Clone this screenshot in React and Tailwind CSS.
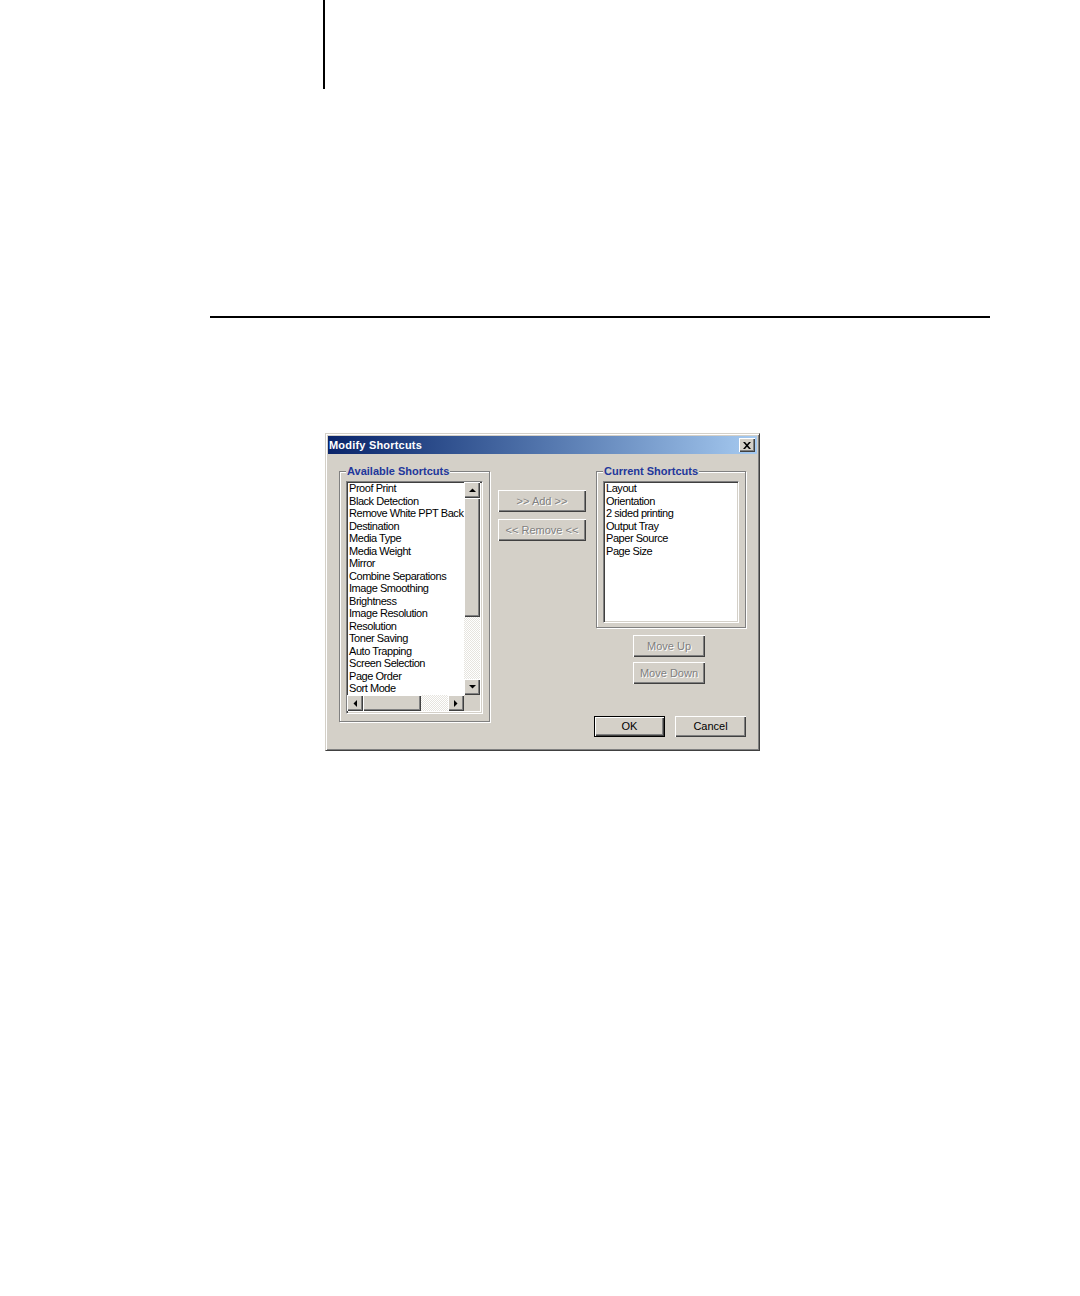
import React from 'react';

const available = [
  'Proof Print',
  'Black Detection',
  'Remove White PPT Back',
  'Destination',
  'Media Type',
  'Media Weight',
  'Mirror',
  'Combine Separations',
  'Image Smoothing',
  'Brightness',
  'Image Resolution',
  'Resolution',
  'Toner Saving',
  'Auto Trapping',
  'Screen Selection',
  'Page Order',
  'Sort Mode',
  'Print Cover Page',
];

const current = ['Layout', 'Orientation', '2 sided printing', 'Output Tray', 'Paper Source', 'Page Size'];

const raised = 'bg-[#d4d0c8] shadow-[inset_1px_1px_0_#fff,inset_-1px_-1px_0_#404040,inset_-2px_-2px_0_#808080]';
const sunken =
  'border border-t-[#808080] border-l-[#808080] border-b-white border-r-white shadow-[inset_1px_1px_0_#404040,inset_-1px_-1px_0_#d4d0c8]';
const checker = 'bg-[repeating-conic-gradient(#e6e4de_0_25%,#ffffff_0_50%)] bg-[length:2px_2px]';

// Small triangle for scroll buttons
const Arrow = ({ dir }) => {
  const pts = {
    up: '0,4 7,4 3.5,0.5',
    down: '0,0 7,0 3.5,3.5',
    left: '4,0 4,7 0.5,3.5',
    right: '0,0 0,7 3.5,3.5',
  }[dir];
  const vertical = dir === 'up' || dir === 'down';
  return (
    <svg width={vertical ? 7 : 4} height={vertical ? 4 : 7} viewBox={vertical ? '0 0 7 4' : '0 0 4 7'}>
      <polygon points={pts} fill="#000" />
    </svg>
  );
};

const ScrollBtn = ({ dir }) => (
  <div className={`w-[16px] h-[16px] flex items-center justify-center ${raised}`}>
    <Arrow dir={dir} />
  </div>
);

const Button = ({ children, disabled, isDefault, className = '' }) => (
  <div
    className={`flex items-center justify-center text-[11px] ${
      isDefault
        ? 'bg-[#d4d0c8] border border-black shadow-[inset_1px_1px_0_#fff,inset_-1px_-1px_0_#404040,inset_-2px_-2px_0_#808080]'
        : raised
    } ${disabled ? 'text-[#808080] [text-shadow:1px_1px_0_#fff]' : 'text-black'} ${className}`}
  >
    {children}
  </div>
);

const GroupBox = ({ title, className = '', children }) => (
  <div className={`relative border border-[#808080] shadow-[inset_1px_1px_0_#fff,1px_1px_0_#fff] ${className}`}>
    <div className="absolute top-[-7px] left-[6px] px-[1px] bg-[#d4d0c8] text-[11px] leading-[13px] font-bold text-[#22379b]">
      {title}
    </div>
    {children}
  </div>
);

const ListItems = ({ items }) => (
  <div className="pl-[2px] text-[11px] leading-[12.5px] tracking-[-0.45px] text-black whitespace-nowrap overflow-hidden">
    {items.map((it) => (
      <div key={it}>{it}</div>
    ))}
  </div>
);

function Dialog() {
  return (
    <div
      className="w-[435px] h-[318px] bg-[#d4d0c8] p-[2px] border border-t-[#d4d0c8] border-l-[#d4d0c8] border-r-[#404040] border-b-[#404040] shadow-[inset_1px_1px_0_#fff,inset_-1px_-1px_0_#808080]"
      style={{ fontFamily: '"Liberation Sans", Arial, sans-serif' }}
    >
      {/* Title bar */}
      <div className="h-[18px] flex items-center justify-between pl-[1px] pr-[2px] bg-gradient-to-r from-[#0a246a] to-[#a6caf0]">
        <span className="text-white font-bold text-[11px] tracking-[0.2px]">Modify Shortcuts</span>
        <div className={`w-[16px] h-[14px] flex items-center justify-center ${raised}`}>
          <svg width="8" height="7" viewBox="0 0 8 7">
            <path d="M0 0h2l2 2.2L6 0h2L5 3.5 8 7H6L4 4.8 2 7H0l3-3.5z" fill="#000" />
          </svg>
        </div>
      </div>

      {/* Body */}
      <div className="flex items-start pl-[11px] pt-[17px]">
        <GroupBox title="Available Shortcuts" className="w-[151px] h-[251px] pl-[6px] pt-[9px]">
          <div className={`w-[137px] h-[233px] bg-white ${sunken}`}>
            <div className="grid grid-cols-[117px_16px] grid-rows-[213px_16px]">
              <ListItems items={available} />
              <div className="flex flex-col">
                <ScrollBtn dir="up" />
                <div className={`h-[119px] ${raised}`} />
                <div className={`flex-1 ${checker}`} />
                <ScrollBtn dir="down" />
              </div>
              <div className="flex">
                <ScrollBtn dir="left" />
                <div className={`w-[58px] ${raised}`} />
                <div className={`flex-1 ${checker}`} />
                <ScrollBtn dir="right" />
              </div>
              <div className="bg-[#d4d0c8]" />
            </div>
          </div>
        </GroupBox>

        <div className="ml-[8px] mt-[19px] flex flex-col gap-[7px]">
          <Button disabled className="w-[88px] h-[22px]">&gt;&gt; Add &gt;&gt;</Button>
          <Button disabled className="w-[88px] h-[22px]">&lt;&lt; Remove &lt;&lt;</Button>
        </div>

        <div className="ml-[8px] w-[152px] flex flex-col">
          <GroupBox title="Current Shortcuts" className="ml-[2px] w-[150px] h-[157px] pl-[6px] pt-[9px]">
            <div className={`w-[136px] h-[142px] bg-white ${sunken}`}>
              <ListItems items={current} />
            </div>
          </GroupBox>
          <div className="ml-[39px] mt-[7px] flex flex-col gap-[5px]">
            <Button disabled className="w-[72px] h-[22px]">Move Up</Button>
            <Button disabled className="w-[72px] h-[22px]">Move Down</Button>
          </div>
          <div className="mt-[32px] flex gap-[10px]">
            <Button isDefault className="w-[71px] h-[21px]">OK</Button>
            <Button className="w-[71px] h-[21px]">Cancel</Button>
          </div>
        </div>
      </div>
    </div>
  );
}

export default function App() {
  return (
    <div className="w-[1080px] h-[1296px] bg-white overflow-hidden">
      <div className="ml-[323px] w-[2px] h-[89px] bg-black" />
      <div className="mt-[227px] ml-[210px] w-[780px] h-[1.5px] bg-black" />
      <div className="mt-[115.5px] ml-[325px]">
        <Dialog />
      </div>
    </div>
  );
}
